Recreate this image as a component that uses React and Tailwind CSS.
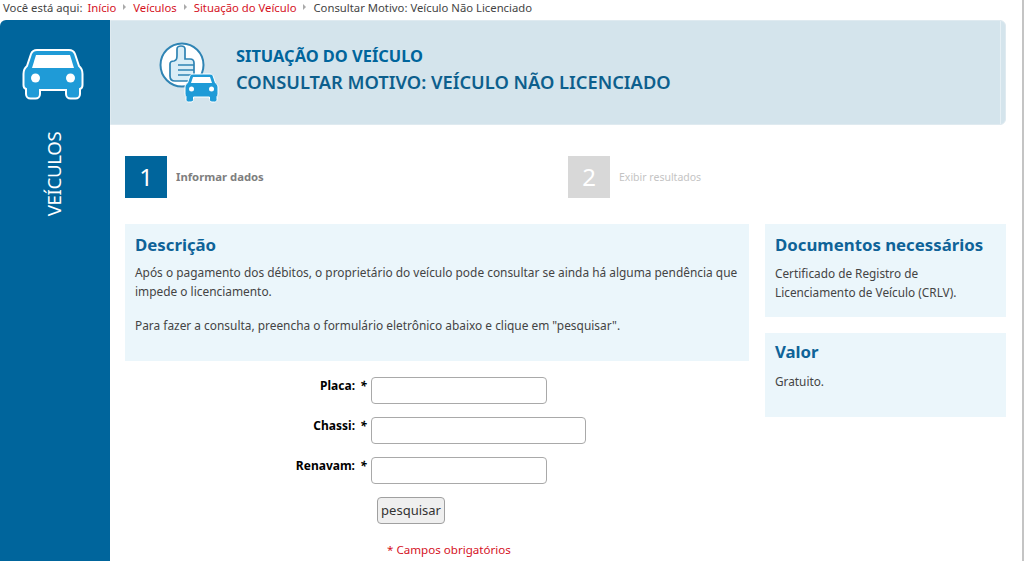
const Car = ({ className }) => (
    <svg className={className} viewBox="0 0 62 52" fill="none">
        <path
            d="M15 2 H47 C50 2 52 3.5 53 6 L57 18 C59.5 20 60.5 23 60.5 26 V37 C60.5 39 59.5 40.5 58 41 V46 C58 48.5 56 50.5 53.5 50.5 H48.5 C46 50.5 44 48.5 44 46 V42 H18 V46 C18 48.5 16 50.5 13.5 50.5 H8.5 C6 50.5 4 48.5 4 46 V41 C2.500 40.5 1.500 39 1.500 37 V26 C1.500 23 2.500 20 5 18 L9 6 C10 3.500 12 2 15 2 Z"
            fill="#1f9bd7"
            stroke="#fff"
            strokeWidth="2"
        />
        <path d="M14 7 H48 L52 20 H10 Z" fill="#fff" />
        <circle cx="13.500" cy="30" r="4.500" fill="#fff" />
        <circle cx="48.500" cy="30" r="4.500" fill="#fff" />
    </svg>
)

const ThumbIcon = () => (
    <svg className="w-[60px] h-[62px]" viewBox="0 0 60 62" fill="none">
        <circle cx="23" cy="23" r="21.500" fill="#fff" stroke="#2f84b4" strokeWidth="2" />
        <path
            d="M16 39 C13 39 11 37 11 34 V22 C11 20 13 19 15 19 C18 18 18 16 18 13 V7 C18 3 26 3 26 7 V17 H31 C34 17 35 19 35 21 V34 C35 37 33 39 30 39 Z"
            fill="#d9edf6"
            stroke="#2f84b4"
            strokeWidth="1.700"
        />
        <path d="M19 23 H35 M19 28 H35 M19 33 H34" stroke="#2f84b4" strokeWidth="1.500" />
        <g transform="translate(1 0)">
            <path
                d="M33 32 H50 C52 32 53 33 53.500 35 L55.500 41 C57 42 58 43.500 58 45 V52 C58 53 57.500 54 57 54.500 V57.500 C57 59 56 60 54.500 60 H52 C50.500 60 49.500 59 49.500 57.500 V55 H33.500 V57.500 C33.500 59 32.500 60 31 60 H28.500 C27 60 26 59 26 57.500 V54.500 C25.500 54 25 53 25 52 V45 C25 43.500 26 42 27.500 41 L29.500 35 C30 33 31 32 33 32 Z"
                fill="#1f9bd7"
                stroke="#fff"
                strokeWidth="1"
            />
            <path d="M33 35 H50 L52 41 H31 Z" fill="#fff" />
            <circle cx="31.500" cy="47" r="2.500" fill="#fff" />
            <circle cx="51.500" cy="47" r="2.500" fill="#fff" />
        </g>
    </svg>
)

const Sep = () => <span className="mx-[7px] inline-block border-y-[3px] border-l-[3px] border-y-transparent border-l-[#aaa] align-[2px]"></span>

const Field = ({ label, width }) => (
    <div className="flex items-start h-[27px] mb-[13px]">
        <label className="w-[230px] text-right font-bold text-black text-[12px] leading-[18px]">{label}</label>
        <span className="ml-[5px] w-[11px] italic font-bold text-[12px] leading-[18px] text-black">*</span>
        <input type="text" className={`${width} h-[27px] bg-white border border-[#a9a9a9] rounded-[4px]`} />
    </div>
)

const App = () => {
    return (
        <div className="h-[561px] overflow-hidden bg-white border-r-2 border-[#c4c4c4] font-['Noto_Sans','DejaVu_Sans',sans-serif] text-[#444] text-[11.8px]">
            <div className="h-[20px] pl-[3px] leading-[16px] text-[11.3px] whitespace-nowrap">
                <span className="mr-[2px]">Você está aqui:</span> <span className="text-[#d5121e]">Início</span><Sep />
                <span className="text-[#d5121e]">Veículos</span><Sep />
                <span className="text-[#d5121e]">Situação do Veículo</span><Sep />
                Consultar Motivo: Veículo Não Licenciado
            </div>

            <div className="flex w-[1006px] h-[541px]">
                <div className="relative w-[110px] shrink-0 bg-[#00659c] rounded-tl-[6px] flex flex-col items-center">
                    <Car className="w-[62px] h-[52px] mt-[28px] -ml-[5px]" />
                    <div className="mt-[30px] h-[88px] -ml-[2px] flex items-center justify-center">
                        <span className="-rotate-90 whitespace-nowrap text-white text-[18.6px] tracking-[-0.3px]">VEÍCULOS</span>
                    </div>
                    <div className="absolute left-[110px] top-[24px] border-y-[29px] border-l-[31px] border-y-transparent border-l-[#00659c]"></div>
                </div>

                <div className="flex-1 min-w-0">
                    <div className="relative h-[105px] bg-[#d4e4ec] border border-[#dfeaf0] rounded-r-[6px] flex items-center pl-[48px]">
                        <ThumbIcon />
                        <div className="ml-[17px] text-[#00659c] -mt-[4px]">
                            <div className="font-bold text-[16.4px] leading-[22px]">SITUAÇÃO DO VEÍCULO</div>
                            <div className="font-semibold text-[18.3px] leading-[30px] text-[#0d5f8d]">CONSULTAR MOTIVO: VEÍCULO NÃO LICENCIADO</div>
                        </div>
                        <div className="absolute right-[4px] top-0 bottom-0 w-[1px] bg-[#e6f0f5]"></div>
                    </div>

                    <div className="pl-[15px]">
                        <div className="flex mt-[31px] h-[42px]">
                            <div className="w-[443px] flex items-center">
                                <div className="w-[42px] h-[42px] bg-[#00659c] text-white text-[24px] flex items-center justify-center">1</div>
                                <span className="ml-[9px] font-bold text-[11.3px] text-[#7e7e7e]">Informar dados</span>
                            </div>
                            <div className="flex items-center">
                                <div className="w-[42px] h-[42px] bg-[#d8d8d8] text-white text-[24px] flex items-center justify-center">2</div>
                                <span className="ml-[9px] mt-[1px] text-[10.5px] text-[#c4c4c4]">Exibir resultados</span>
                            </div>
                        </div>

                        <div className="flex gap-[16px] mt-[26px]">
                            <div className="w-[624px]">
                                <div className="h-[137px] bg-[#ebf6fb] px-[10px] pt-[9px] leading-[19px] text-[11.9px]">
                                    <h2 className="font-bold text-[16.8px] leading-[24px] text-[#0f6398] mb-[6px]">Descrição</h2>
                                    <p>Após o pagamento dos débitos, o proprietário do veículo pode consultar se ainda há alguma pendência que impede o licenciamento.</p>
                                    <p className="mt-[15px]">Para fazer a consulta, preencha o formulário eletrônico abaixo e clique em "pesquisar".</p>
                                </div>
                                <form className="pt-[16px]">
                                    <Field label="Placa:" width="w-[176px]" />
                                    <Field label="Chassi:" width="w-[215px]" />
                                    <Field label="Renavam:" width="w-[176px]" />
                                    <button type="button" className="block ml-[252px] w-[68px] h-[27px] bg-[#efefef] border border-[#a0a0a0] rounded-[4px] text-[13px] text-[#333]">pesquisar</button>
                                    <div className="mt-[17px] ml-[262px] text-[11.6px] text-[#d5121e] leading-[18px]">* Campos obrigatórios</div>
                                </form>
                            </div>
                            <div className="w-[241px]">
                                <div className="h-[93px] bg-[#ebf6fb] px-[10px] pt-[9px] leading-[19px]">
                                    <h2 className="font-bold text-[16.8px] leading-[24px] text-[#0f6398] mb-[7px]">Documentos necessários</h2>
                                    <p>Certificado de Registro de Licenciamento de Veículo (CRLV).</p>
                                </div>
                                <div className="h-[84px] mt-[16px] bg-[#ebf6fb] px-[10px] pt-[7px] leading-[19px]">
                                    <h2 className="font-bold text-[16.8px] leading-[24px] text-[#0f6398] mb-[8px]">Valor</h2>
                                    <p>Gratuito.</p>
                                </div>
                            </div>
                        </div>
                    </div>
                </div>
            </div>
        </div>
    )
}

export default App
